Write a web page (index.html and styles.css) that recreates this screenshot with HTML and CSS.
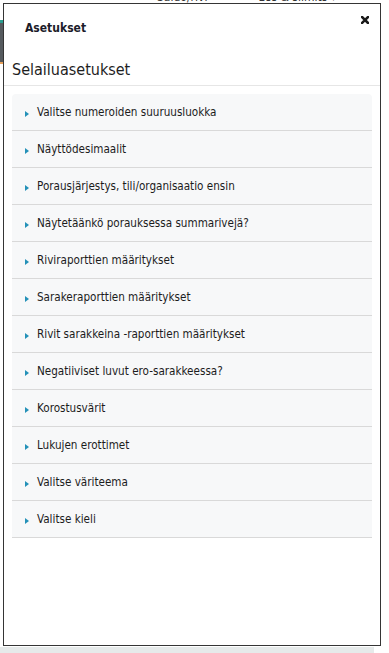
FILE: index.html
```html
<!DOCTYPE html>
<html lang="fi">
<head>
<meta charset="utf-8">
<title>Asetukset</title>
<link rel="stylesheet" href="styles.css">
</head>
<body>
<div class="page">
  <div class="bg-top"><div class="bg-text"><span class="bg-a">Saldo/rivi</span><span class="bg-b">Bss &amp; slimits ▾</span></div></div>
  <div class="bg-mid">
    <div class="bg-strip"><i class="s-teal"></i><i class="s-grey"></i><i class="s-orange"></i></div>
  </div>
  <div class="bg-bottom"></div>
</div>

<div class="modal" role="dialog">
  <div class="modal-header">
    <h4 class="modal-title">Asetukset</h4>
    <button class="close" aria-label="Sulje">
      <svg width="8" height="8" viewBox="0 0 8 8"><path d="M1 1L7 7M7 1L1 7" stroke="#1a1a1a" stroke-width="2.5" stroke-linecap="square"/></svg>
    </button>
  </div>
  <h3 class="section-title">Selailuasetukset</h3>
  <div class="panels">
    <div class="panel"><svg class="caret" width="4" height="6" viewBox="0 0 4 6"><path d="M0 0L4 3L0 6Z"/></svg><span class="panel-title">Valitse numeroiden suuruusluokka</span></div>
    <div class="panel"><svg class="caret" width="4" height="6" viewBox="0 0 4 6"><path d="M0 0L4 3L0 6Z"/></svg><span class="panel-title">Näyttödesimaalit</span></div>
    <div class="panel"><svg class="caret" width="4" height="6" viewBox="0 0 4 6"><path d="M0 0L4 3L0 6Z"/></svg><span class="panel-title">Porausjärjestys, tili/organisaatio ensin</span></div>
    <div class="panel"><svg class="caret" width="4" height="6" viewBox="0 0 4 6"><path d="M0 0L4 3L0 6Z"/></svg><span class="panel-title">Näytetäänkö porauksessa summarivejä?</span></div>
    <div class="panel"><svg class="caret" width="4" height="6" viewBox="0 0 4 6"><path d="M0 0L4 3L0 6Z"/></svg><span class="panel-title">Riviraporttien määritykset</span></div>
    <div class="panel"><svg class="caret" width="4" height="6" viewBox="0 0 4 6"><path d="M0 0L4 3L0 6Z"/></svg><span class="panel-title">Sarakeraporttien määritykset</span></div>
    <div class="panel"><svg class="caret" width="4" height="6" viewBox="0 0 4 6"><path d="M0 0L4 3L0 6Z"/></svg><span class="panel-title">Rivit sarakkeina -raporttien määritykset</span></div>
    <div class="panel"><svg class="caret" width="4" height="6" viewBox="0 0 4 6"><path d="M0 0L4 3L0 6Z"/></svg><span class="panel-title">Negatiiviset luvut ero-sarakkeessa?</span></div>
    <div class="panel"><svg class="caret" width="4" height="6" viewBox="0 0 4 6"><path d="M0 0L4 3L0 6Z"/></svg><span class="panel-title">Korostusvärit</span></div>
    <div class="panel"><svg class="caret" width="4" height="6" viewBox="0 0 4 6"><path d="M0 0L4 3L0 6Z"/></svg><span class="panel-title">Lukujen erottimet</span></div>
    <div class="panel"><svg class="caret" width="4" height="6" viewBox="0 0 4 6"><path d="M0 0L4 3L0 6Z"/></svg><span class="panel-title">Valitse väriteema</span></div>
    <div class="panel"><svg class="caret" width="4" height="6" viewBox="0 0 4 6"><path d="M0 0L4 3L0 6Z"/></svg><span class="panel-title">Valitse kieli</span></div>
  </div>
</div>
</body>
</html>
```

FILE: styles.css
```css
html, body {
  margin: 0;
  padding: 0;
  background: #ffffff;
}

body {
  width: 389px;
  height: 653px;
  overflow: hidden;
  position: relative;
  font-family: "DejaVu Sans Condensed", "DejaVu Sans", sans-serif;
  color: #222222;
}

/* background page (behind the dialog) */
.page {
  height: 653px;
  display: flex;
  flex-direction: column;
}

.bg-top {
  height: 3px;
  overflow: hidden;
}

.bg-text {
  margin-top: -9px;
  font-size: 12px;
  line-height: 12px;
  color: #333333;
  white-space: nowrap;
}

.bg-a {
  margin-left: 157px;
}

.bg-b {
  margin-left: 51px;
}

.bg-mid {
  flex: 1;
  padding-top: 17px;
}

.bg-strip {
  width: 3px;
  display: flex;
  flex-direction: column;
}

.bg-strip i {
  display: block;
}

.s-teal {
  height: 3px;
  background: #2a9d8f;
}

.s-grey {
  height: 39px;
  background: #555a5e;
}

.s-orange {
  height: 2px;
  background: #e8a05a;
}

.bg-bottom {
  height: 6px;
  width: 374px;
  background: #e6eaea;
}

/* dialog */
.modal {
  position: absolute;
  left: 3px;
  top: 3px;
  width: 378px;
  height: 643px;
  box-sizing: border-box;
  border: 1px solid #353535;
  background: #ffffff;
}

.modal-header {
  position: relative;
  padding: 16px 0 0 21px;
}

.modal-title {
  margin: 0;
  font-size: 12px;
  line-height: 16px;
  font-weight: bold;
  color: #1c1c2a;
}

.close {
  position: absolute;
  top: 12px;
  right: 11px;
  width: 8px;
  height: 8px;
  padding: 0;
  margin: 0;
  border: 0;
  background: none;
  display: block;
}

.close svg {
  display: block;
}

.section-title {
  margin: 24px 0 0 0;
  padding: 0 8px 5px 8px;
  font-size: 16px;
  line-height: 20px;
  font-weight: normal;
  color: #1e1e1e;
  border-bottom: 1px solid #e6e6e6;
}

.panels {
  margin: 8px 8px 0 8px;
  border-radius: 4px 4px 0 0;
  overflow: hidden;
}

.panel {
  box-sizing: border-box;
  height: 37px;
  padding-top: 1px;
  border-bottom: 1px solid #d9d9d9;
  background: #f7f8f9;
  display: flex;
  align-items: center;
}

.caret {
  display: block;
  margin: 2px 0 0 13px;
  fill: #2491b8;
  flex: none;
}

.panel-title {
  margin-left: 8px;
  font-size: 11.6px;
  line-height: 35px;
  color: #1c1c1c;
  white-space: nowrap;
}
```
